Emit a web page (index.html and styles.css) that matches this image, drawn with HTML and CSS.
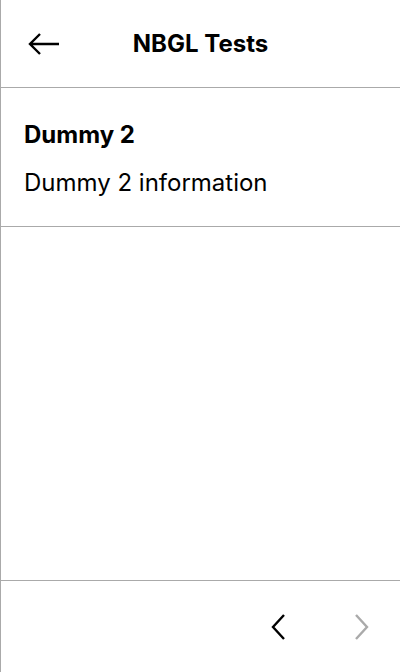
FILE: index.html
```html
<!DOCTYPE html>
<html>
<head>
<meta charset="utf-8">
<link rel="stylesheet" href="styles.css">
</head>
<body>
<div class="screen">
  <div class="header">
    <div class="back">
      <svg width="32" height="24" viewBox="0 0 32 24"><path d="M31 12H2M12 2L2 12L12 22" fill="none" stroke="#000" stroke-width="2.4"/></svg>
    </div>
    <div class="title">NBGL Tests</div>
  </div>
  <div class="section">
    <div class="item-title">Dummy 2</div>
    <div class="item-text">Dummy 2 information</div>
  </div>
  <div class="spacer"></div>
  <div class="footer">
    <div class="nav">
      <svg class="chev" width="16" height="26" viewBox="0 0 16 26"><path d="M13 1L2 13L13 25" fill="none" stroke="#000" stroke-width="2.4"/></svg>
    </div>
    <div class="nav">
      <svg class="chev" width="16" height="26" viewBox="0 0 16 26"><path d="M3 1L14 13L3 25" fill="none" stroke="#aaa" stroke-width="2.4"/></svg>
    </div>
  </div>
</div>
</body>
</html>
```
FILE: styles.css
```css
html, body { margin: 0; padding: 0; background: #fff; }
body { font-family: Inter, "Noto Sans", sans-serif; color: #000; }
.screen {
  width: 399px;
  height: 672px;
  border-left: 1px solid #aaa;
  display: flex;
  flex-direction: column;
}
.header {
  height: 87px;
  border-bottom: 1px solid #aaa;
  display: flex;
  align-items: center;
  position: relative;
}
.back {
  position: absolute;
  left: 27px;
  top: 32px;
  display: flex;
}
.title {
  width: 100%;
  text-align: center;
  font-weight: 700;
  font-size: 24px;
}
.section {
  height: 139px;
  border-bottom: 1px solid #aaa;
  padding: 0 23px;
  box-sizing: border-box;
}
.item-title {
  font-weight: 700;
  font-size: 24px;
  margin-top: 32px;
  line-height: 30px;
}
.item-text {
  font-size: 24px;
  line-height: 30px;
  margin-top: 18px;
}
.spacer { flex: 1; }
.footer {
  height: 91px;
  border-top: 1px solid #aaa;
  display: flex;
  justify-content: flex-end;
  align-items: center;
  gap: 4px;
}
.nav {
  width: 78px;
  display: flex;
  justify-content: center;
}
.chev { display: block; }
```
